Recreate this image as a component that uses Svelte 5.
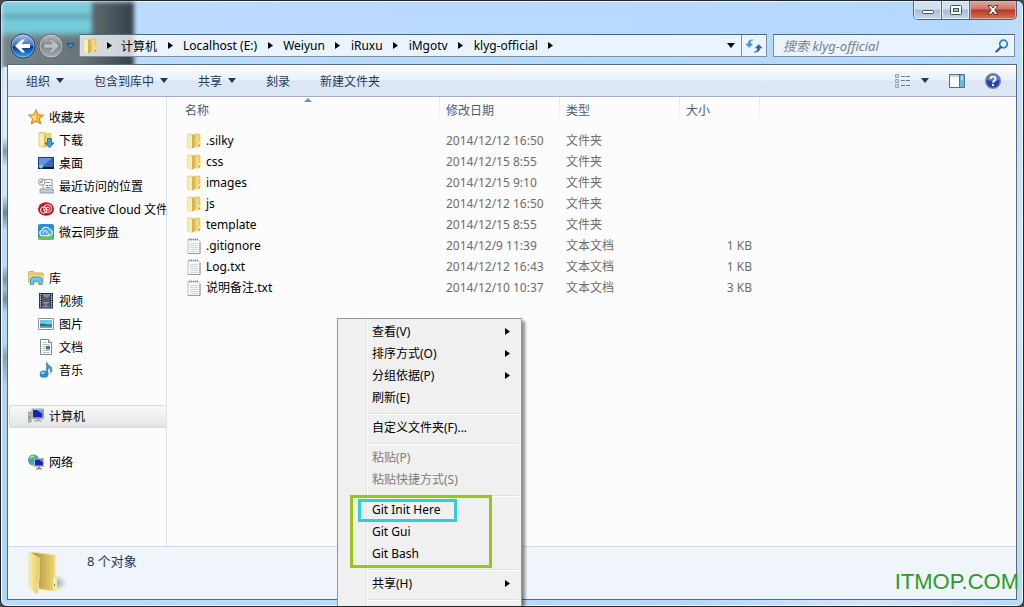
<script lang="ts">
  const crumbs = ['计算机', 'Localhost (E:)', 'Weiyun', 'iRuxu', 'iMgotv', 'klyg-official'];

  const commands = [
    { label: '组织', menu: true },
    { label: '包含到库中', menu: true },
    { label: '共享', menu: true },
    { label: '刻录', menu: false },
    { label: '新建文件夹', menu: false },
  ];

  const places = [
    {
      label: '收藏夹',
      icon: 'star',
      items: [
        { label: '下载', icon: 'download' },
        { label: '桌面', icon: 'desktop' },
        { label: '最近访问的位置', icon: 'recent' },
        { label: 'Creative Cloud 文件', icon: 'cc' },
        { label: '微云同步盘', icon: 'cloud' },
      ],
    },
    {
      label: '库',
      icon: 'library',
      items: [
        { label: '视频', icon: 'video' },
        { label: '图片', icon: 'picture' },
        { label: '文档', icon: 'doc' },
        { label: '音乐', icon: 'music' },
      ],
    },
    { label: '计算机', icon: 'computer', items: [] },
    { label: '网络', icon: 'network', items: [] },
  ];

  const files = [
    { name: '.silky', date: '2014/12/12 16:50', type: '文件夹', size: '' },
    { name: 'css', date: '2014/12/15 8:55', type: '文件夹', size: '' },
    { name: 'images', date: '2014/12/15 9:10', type: '文件夹', size: '' },
    { name: 'js', date: '2014/12/12 16:50', type: '文件夹', size: '' },
    { name: 'template', date: '2014/12/15 8:55', type: '文件夹', size: '' },
    { name: '.gitignore', date: '2014/12/9 11:39', type: '文本文档', size: '1 KB' },
    { name: 'Log.txt', date: '2014/12/12 16:43', type: '文本文档', size: '1 KB' },
    { name: '说明备注.txt', date: '2014/12/10 10:37', type: '文本文档', size: '3 KB' },
  ];

  const menu = [
    [
      { label: '查看(V)', sub: true },
      { label: '排序方式(O)', sub: true },
      { label: '分组依据(P)', sub: true },
      { label: '刷新(E)' },
    ],
    [{ label: '自定义文件夹(F)...' }],
    [
      { label: '粘贴(P)', disabled: true },
      { label: '粘贴快捷方式(S)', disabled: true },
    ],
    [{ label: 'Git Init Here' }, { label: 'Git Gui' }, { label: 'Git Bash' }],
    [{ label: '共享(H)', sub: true }],
    [],
  ];

  let current = $state('计算机');
  let query = $state('');
</script>

{#snippet icon(name)}
  <svg class="icon" viewBox="0 0 16 16" width="16" height="16" aria-hidden="true">
    {#if name === 'folder'}
      <path d="M1.500 1h5v14H3l-1.500-1z" fill="#f5e596" stroke="#e3cd7b" stroke-width=".6" />
      <path d="M8 1h6v12.500l-1 .5H8z" fill="#ecd173" stroke="#dfc263" stroke-width=".6" />
      <path d="M2 2l4 1v12.500L2 14z" fill="#f9efae" />
      <path d="M6 1.500l2 .5v13l-2 .5z" fill="#d3b452" />
      <path d="M8 2h2v12H8z" fill="#dfc264" />
      <path d="M10 2h2v12h-2z" fill="#f3dc83" />
      <path d="M13 9h1v4h-1z" fill="#fdf8d8" />
      <path d="M13 11.500h1v1.500h-1z" fill="#4fa8a8" />
    {:else if name === 'file'}
      <path d="M2 1.500h10l2 2v12H2z" fill="#f8fafb" stroke="#bcc1c5" />
      <path d="M14 4v11.500H2" fill="none" stroke="#989da1" />
      <path d="M3 1.500h9" stroke="#878c90" stroke-width="2" stroke-dasharray="1 1" />
      <path d="M4 5.500h8M4 7.500h8M4 9.500h8M4 11.500h8M4 13.500h8" stroke="#c9dae5" />
    {:else if name === 'star'}
      <path d="M8 .7l2.200 5 5.300.5-4 3.500 1.200 5.300L8 12.200 3.300 15l1.200-5.300-4-3.500 5.300-.5z" fill="#f9b233" stroke="#d9762b" stroke-width=".9" />
      <path d="M8 2.500L6.500 6.500l-4 .5 3.200 2.500L5 12.500l3-1.700z" fill="#fde58a" />
    {:else if name === 'download'}
      <path d="M1 .5h6l1 1h5v12.500H8L7 15.500 1 14z" fill="#eed67c" stroke="#dcc26c" stroke-width=".8" />
      <path d="M1.500 1.500L6 3v12l-4.500-1.500z" fill="#faefb0" />
      <path d="M6 3l2-1v12l-2 1z" fill="#d9bd5c" />
      <path d="M9.500 6.500h4V11H16l-4.500 4.800L7 11h2.500z" fill="#3aa0e0" stroke="#19659e" stroke-width=".8" />
    {:else if name === 'desktop'}
      <path d="M0 2h16v12H0z" fill="#16418c" />
      <path d="M1 3h14v9H1z" fill="#3566b8" />
      <path d="M1 3h13L5 11H1z" fill="#6794d8" />
      <path d="M0 12h16v2H0z" fill="#101e38" />
      <circle cx="3" cy="11.500" r="2" fill="#84cfe8" />
    {:else if name === 'recent'}
      <path d="M5 1.500h9V12H5z" fill="#fafafa" stroke="#9ba2a8" />
      <path d="M2 11h13l1 4H2z" fill="#c5cbd1" stroke="#8c9299" stroke-width=".8" />
      <path d="M8 4.500h4M8 9.500h4" stroke="#8d959c" />
      <path d="M8 7h2v1H8zM11 7h2v1h-2z" fill="#2f8fd6" />
      <circle cx="3.800" cy="4" r="3.300" fill="#eff2f4" stroke="#9299a0" />
      <path d="M4 2v2.200H2" fill="none" stroke="#667078" />
    {:else if name === 'cc'}
      <ellipse cx="8" cy="8" rx="8" ry="6.700" fill="#c2151f" />
      <circle cx="5.700" cy="9" r="3.200" fill="none" stroke="#fff" />
      <circle cx="9.700" cy="7.500" r="4" fill="none" stroke="#fff" />
      <path d="M5.500 9.500c1.500.5 2.500-3.500 4.500-3.500 2.200 0 2.200 3 0 3-1 0-1.500-.7-2-1.200" fill="none" stroke="#fff" />
    {:else if name === 'cloud'}
      <rect width="16" height="16" rx="2" fill="#2d8fd9" />
      <path d="M0 12.500h16V14a2 2 0 0 1-2 2H2a2 2 0 0 1-2-2z" fill="#62c94d" />
      <path d="M4.300 11.800a2.800 2.800 0 0 1-.3-5.500 4.200 4.200 0 0 1 7.900-.6 3.100 3.100 0 0 1-.2 6.100z" fill="#4ba6e5" stroke="#fff" stroke-width="1.100" />
      <path d="M5.500 9.500a2 2 0 0 1 3-2.500c1 .8.500 2.500-.7 2.500M8 11.800c2 0 3-1.200 3-2.800" fill="none" stroke="#fff" />
    {:else if name === 'library'}
      <path d="M0 3l1-1.500h5L7 3h8v9H0z" fill="#eecf6c" stroke="#c9a748" stroke-width=".8" />
      <path d="M1 5h14v8H1z" fill="#f9e99e" stroke="#d4b65c" stroke-width=".7" />
      <path d="M2.500 14.500V9l1.500-2h8.500L14 9v5.500h-3v-3.300H5.500v3.300z" fill="#6ecbed" stroke="#2d87b5" stroke-width=".8" />
    {:else if name === 'video'}
      <path d="M1 0h14v15.500H1z" fill="#262d36" />
      <path d="M2.500 1v14M13.500 1v14" stroke="#e2e6ea" stroke-width="1.300" stroke-dasharray="1.300 1" />
      <path d="M4 1h8v6.500H4zM4 8.500h8v6H4z" fill="#4aa0dc" />
      <path d="M4 1l4 4 4-2v4.500H4zM4 9l4 3 4-3v5l-4-2-4 2z" fill="#7a4b40" />
    {:else if name === 'picture'}
      <path d="M.5 2.500h15v11H.5z" fill="#fff" stroke="#8b9299" />
      <path d="M2 4h12v8H2z" fill="#74c5ed" />
      <path d="M2 8c4-2 7 2 12 0v4H2z" fill="#24776e" />
      <path d="M2 10.500c5-1.500 8 .5 12-.5v2H2z" fill="#4daed0" />
    {:else if name === 'doc'}
      <path d="M2.500.5h8l3 3v12h-11z" fill="#fff" stroke="#7f868c" />
      <path d="M10.500.5v3h3" fill="#dce2e6" stroke="#7f868c" />
      <path d="M4.500 3.500h4M4.500 5.500h7M4.500 7.500h3M4.500 9.500h3M4.500 11.500h7M4.500 13.500h7" stroke="#b5bdc4" />
      <path d="M8 7h4v3.500H8z" fill="#2878b4" />
    {:else if name === 'music'}
      <path d="M8.500 13V0c1 3.500 5.500 3.700 5.500 7.700 0 1.500-.6 2.500-1.500 3.500.7-3-.5-4.700-2.500-5.200V13z" fill="#3e9cdb" stroke="#1c669f" stroke-width=".5" />
      <ellipse cx="6" cy="12.200" rx="4.300" ry="3.600" fill="#2c8bd0" />
      <ellipse cx="5" cy="11" rx="2.200" ry="1.300" fill="#86c7ef" />
    {:else if name === 'computer'}
      <path d="M0 4h3v10H0z" fill="#b9bfc2" stroke="#81888c" stroke-width=".7" />
      <path d="M1 8h1v3H1z" fill="#50b64a" />
      <path d="M4 1h11.500v9.500H4z" fill="#d8dce2" stroke="#8b93a0" stroke-width=".8" />
      <path d="M5 2h9.500v7.500H5z" fill="#1523b4" />
      <path d="M9 2h5.500v4z" fill="#7f93f0" />
      <path d="M8.500 10.500h3V12H14v1.500H6V12h2.500z" fill="#a5acb5" />
    {:else if name === 'network'}
      <circle cx="5.500" cy="6" r="5.500" fill="#3c9dd6" />
      <path d="M2 2c3-2 5-1 6 0L6 4 3 6 1 5zM2 8l4 1-1 2.500z" fill="#5fc25b" />
      <path d="M2 4c2-2 3-2 4-1" fill="none" stroke="#d8f2ff" />
      <path d="M6 4.500h10v8H6z" fill="#cdd5de" stroke="#8a93a1" stroke-width=".6" />
      <path d="M7 5.500h8v6H7z" fill="#1425b5" />
      <path d="M11 5.500h4v3z" fill="#7c92ef" />
      <path d="M10 12.500h2V14h2v1.500H8V14h2z" fill="#838c99" />
    {/if}
  </svg>
{/snippet}

{#snippet chevron()}
  <svg class="chevron" width="5" height="7" viewBox="0 0 5 7" aria-hidden="true"><path d="M0 0l5 3.500L0 7z" fill="currentColor" /></svg>
{/snippet}

{#snippet caret()}
  <svg class="caret" width="8" height="5" viewBox="0 0 8 5" aria-hidden="true"><path d="M0 0h8L4 5z" fill="currentColor" /></svg>
{/snippet}

<div class="window">
  <div class="backdrop"></div>
  <div class="streaks"></div>

  <header class="frame">
    <div class="controls">
      <button aria-label="最小化">
        <svg width="14" height="10" viewBox="0 0 14 10"><rect x="1.500" y="5.500" width="11" height="3" rx="1" fill="#fff" stroke="#4a5563" /></svg>
      </button>
      <button aria-label="最大化">
        <svg width="12" height="10" viewBox="0 0 12 10"><rect x=".5" y=".5" width="11" height="9" rx="1" fill="#fff" stroke="#4a5563" /><rect x="3.500" y="3.500" width="5" height="3" fill="#a9bdd2" stroke="#4a5563" /></svg>
      </button>
      <button class="close" aria-label="关闭">
        <svg width="12" height="10" viewBox="0 0 12 10"><path d="M1 .5h3l2 2.500 2-2.500h3L7.800 5 11 9.500H8L6 7 4 9.500H1L4.200 5z" fill="#fff" stroke="#5b3a3c" /></svg>
      </button>
    </div>

    <nav class="navbar">
      <div class="history">
        <button aria-label="后退">
          <svg width="26" height="26" viewBox="0 0 26 26">
            <defs>
              <linearGradient id="back" x2="0" y2="1">
                <stop offset="0" stop-color="#a9c4ea" />
                <stop offset=".48" stop-color="#3f6fc0" />
                <stop offset=".52" stop-color="#0b348c" />
                <stop offset="1" stop-color="#29b1f0" />
              </linearGradient>
            </defs>
            <circle cx="13" cy="13" r="12" fill="url(#back)" stroke="#2a3c60" />
            <circle cx="13" cy="13" r="11" fill="none" stroke="#c3d8f2" stroke-opacity=".6" />
            <path d="M5 13l7-6.500h3L11.500 11H20v4h-8.500l3.500 4.500h-3z" fill="#fff" />
          </svg>
        </button>
        <button aria-label="前进">
          <svg width="26" height="26" viewBox="0 0 26 26">
            <defs>
              <linearGradient id="forward" x2="0" y2="1">
                <stop offset="0" stop-color="#b6b9bb" />
                <stop offset=".5" stop-color="#85898c" />
                <stop offset="1" stop-color="#a9adb0" />
              </linearGradient>
            </defs>
            <circle cx="13" cy="13" r="12" fill="url(#forward)" stroke="#5f6569" />
            <circle cx="13" cy="13" r="11" fill="none" stroke="#d2d6d8" stroke-opacity=".6" />
            <path d="M21 13l-7-6.500h-3l3.500 4.500H6v4h8.500L11 19.500h3z" fill="#bfc2c4" stroke="#7c8184" stroke-width=".6" />
          </svg>
        </button>
        <button class="recent" aria-label="最近浏览">
          <svg width="9" height="6" viewBox="0 0 9 6"><path d="M.7.7h7.600L4.500 5.300z" fill="#3e9bdc" stroke="#16477e" /></svg>
        </button>
      </div>

      <div class="address">
        {@render icon('folder')}
        <span class="sep root">{@render chevron()}</span>
        {#each crumbs as crumb}
          <button class="crumb">{crumb}</button>
          <span class="sep">{@render chevron()}</span>
        {/each}
        <button class="drop" aria-label="以前的位置">{@render caret()}</button>
        <button class="refresh" aria-label="刷新">
          <svg width="16" height="14" viewBox="0 0 16 14">
            <path d="M7 1C4.500 1 4.500 2.500 4.500 5h2L3.300 8.500 0 5h2.200c0-3 1.300-4.500 4.800-4z" fill="#4a9edb" stroke="#2f77b4" stroke-width=".5" />
            <path d="M8 13c2.700 0 3.500-1.500 3.500-4h-2l3.200-3.500L16 9h-2.200c0 3-1.800 4.500-5.800 4z" fill="#2f68b0" stroke="#1f4e8f" stroke-width=".5" />
          </svg>
        </button>
      </div>

      <label class="search">
        <input type="text" placeholder="搜索 klyg-official" aria-label="搜索" bind:value={query} />
        <svg width="14" height="14" viewBox="0 0 14 14">
          <circle cx="8.500" cy="5" r="3.800" fill="#e4f3fd" stroke="#3181cc" stroke-width="1.800" />
          <path d="M6 8L1.500 12.500" stroke="#3b5b93" stroke-width="2.400" stroke-linecap="round" />
        </svg>
      </label>
    </nav>
  </header>

  <div class="client">
    <div class="toolbar">
      {#each commands as command}
        <button>
          {command.label}
          {#if command.menu}{@render caret()}{/if}
        </button>
      {/each}
      <div class="tools">
        <button aria-label="更改您的视图">
          <svg width="16" height="14" viewBox="0 0 16 14">
            <path d="M.5.500h3v3h-3zM.5 5.500h3v3h-3zM.5 10.500h3v3h-3z" fill="#fff" stroke="#97a1ac" />
            <path d="M1.500 1.500h1v1h-1z" fill="#3e8a56" /><path d="M1.500 6.500h1v1h-1z" fill="#b23e38" /><path d="M1.500 11.500h1v1h-1z" fill="#356fb4" />
            <path d="M6 2.500h4M11 2.500h4M6 6.500h4M11 6.500h4M6 11.500h4M11 11.500h4" stroke="#6c7885" />
          </svg>
          {@render caret()}
        </button>
        <button aria-label="预览窗格">
          <svg width="16" height="14" viewBox="0 0 16 14">
            <path d="M.5.500h15v13H.5z" fill="#fff" stroke="#587080" />
            <path d="M1 1h9v2H1z" fill="#cbdad6" />
            <path d="M10.500 1H15v12h-4.500z" fill="#67b9d8" />
            <path d="M10.500 1v12" stroke="#587080" />
            <path d="M12 2h2v4h-2z" fill="#a4e2f1" />
          </svg>
        </button>
        <button aria-label="帮助">
          <svg width="16" height="16" viewBox="0 0 16 16">
            <circle cx="8" cy="8" r="7.300" fill="#2146ab" stroke="#7c889a" stroke-width="1.400" />
            <path d="M2 7a6 6 0 0 1 12 0c-4 2-8 1-12 0z" fill="#5a7fd2" />
            <path d="M5.500 6c0-3.200 5-3.200 5 0 0 1.700-2.400 1.900-2.400 3.700M8 11v1.900" fill="none" stroke="#fff" stroke-width="1.900" />
          </svg>
        </button>
      </div>
    </div>

    <div class="body">
      <aside>
        {#each places as place}
          <ul>
            <li>
              <a href="#top" class:active={place.label === current} onclick={() => (current = place.label)}>
                {@render icon(place.icon)}<span>{place.label}</span>
              </a>
            </li>
            {#each place.items as item}
              <li class="child">
                <a href="#top">{@render icon(item.icon)}<span>{item.label}</span></a>
              </li>
            {/each}
          </ul>
        {/each}
      </aside>

      <main>
        <table>
          <thead>
            <tr>
              <th class="name">
                名称
                <svg class="sorted" width="8" height="4" viewBox="0 0 8 4"><path d="M0 4l4-4 4 4z" fill="#6898b5" /></svg>
              </th>
              <th class="date">修改日期</th>
              <th class="type">类型</th>
              <th class="size">大小</th>
              <th class="rest"></th>
            </tr>
          </thead>
          <tbody>
            {#each files as file}
              <tr>
                <td><div class="file">{@render icon(file.size ? 'file' : 'folder')}{file.name}</div></td>
                <td>{file.date}</td>
                <td>{file.type}</td>
                <td class="number">{file.size}</td>
                <td></td>
              </tr>
            {/each}
          </tbody>
        </table>
      </main>
    </div>

    <footer>
      <svg width="40" height="44" viewBox="0 0 40 44" aria-hidden="true">
        <defs>
          <linearGradient id="flap"><stop offset="0" stop-color="#fbf0ac" /><stop offset="1" stop-color="#e6c95c" /></linearGradient>
          <linearGradient id="inner"><stop offset=".2" stop-color="#b89a43" /><stop offset="1" stop-color="#f2d976" /></linearGradient>
          <radialGradient id="shade"><stop offset="0" stop-color="#8d939a" stop-opacity=".8" /><stop offset="1" stop-color="#8d939a" stop-opacity="0" /></radialGradient>
        </defs>
        <ellipse cx="28" cy="32" rx="11" ry="8" fill="url(#shade)" />
        <path d="M3 1l24 3v21l1 14-2 1-15-2z" fill="url(#inner)" stroke="#f0df9a" />
        <path d="M1 1l10 6v22l-1 1v12l-2 1-7-7z" fill="url(#flap)" stroke="#f3e6a8" />
        <path d="M25 27l2-2 2 1v13l-4 1z" fill="#f7e896" />
        <path d="M26 28h1v5h-1z" fill="#fff" /><path d="M26 33h1v2h-1z" fill="#2a9a9c" />
      </svg>
      <p>8 个对象</p>
    </footer>
  </div>

  <div class="menu" role="menu">
    {#each menu as group}
      <div class="group" class:marked={group[0]?.label.startsWith('Git')}>
        {#each group as item}
          <button role="menuitem" disabled={item.disabled}>
            <span>{item.label}</span>
            {#if item.sub}{@render chevron()}{/if}
          </button>
        {/each}
      </div>
    {/each}
  </div>

  <div class="watermark">ITMOP.COM</div>
</div>

<style>
  :global(body) {
    margin: 0;
    background: #434e52;
  }

  .window {
    position: relative;
    box-sizing: border-box;
    display: flex;
    flex-direction: column;
    height: 100vh;
    overflow: hidden;
    border: 1px solid #20262e;
    border-radius: 7px;
    background: linear-gradient(115deg, #bcdcff 0%, #b5d8fe 75%, #d2e8fe 88%, #b8d9fb 100%);
    box-shadow: inset 0 0 0 1px #eef7ff;
    font-family: "Noto Sans", "Noto Sans CJK SC", sans-serif;
    font-size: 12px;
    color: #000;
  }

  button {
    display: flex;
    align-items: center;
    margin: 0;
    padding: 0;
    border: none;
    background: none;
    font: inherit;
    color: inherit;
    white-space: nowrap;
  }

  svg {
    display: block;
    flex: none;
  }

  /* blurred desktop showing through the glass */
  .backdrop {
    position: absolute;
    top: 1px;
    left: 1px;
    width: 132px;
    height: 66px;
    background:
      linear-gradient(#7ccbd9 0 11px, #5e9eaa 14px, #74cbd9 18px 29px, transparent 36px) 0 0 / 90px 40px no-repeat,
      linear-gradient(90deg, #77838a, #69737a 60%, #354149);
    filter: blur(2px);
  }

  .streaks {
    position: absolute;
    top: 66px;
    bottom: 6px;
    left: 2px;
    width: 4px;
    background: linear-gradient(#dfe9f2, #e4edf6 70px, #8795a4 84px, #d9e6f3 100px 128px, #b5d2f0 132px, #6f8194 146px, #c3dcf5 164px 198px, #7f90a2 212px, #a5bcd3 222px, #7b8c9e 232px, #b7d6f5 246px 276px, #8c9eb0 290px, #9fb5cb 304px, #b2d2f2 320px);
  }

  .frame {
    position: relative;
    display: flex;
    flex-direction: column;
    justify-content: space-between;
    height: 56px;
    padding: 0 6px 7px;
  }

  .controls {
    display: flex;
    align-self: flex-end;
    height: 18px;
    border: 1px solid #53647a;
    border-top: none;
    border-radius: 0 0 5px 5px;
    overflow: hidden;
  }

  .controls button {
    justify-content: center;
    box-sizing: border-box;
    width: 28px;
    border-right: 1px solid #53647a;
    background: linear-gradient(#d3e0ef 45%, #a7bdd5 50%, #c4d8ed);
    box-shadow: inset 0 0 0 1px #e4eefa;
  }

  .controls .close {
    width: 46px;
    border-right: none;
    background: linear-gradient(#dfa497 5%, #cc7466 45%, #b63524 50%, #d87657);
    box-shadow: inset 0 0 0 1px #e3aba0;
  }

  .navbar {
    display: flex;
    align-items: center;
    height: 23px;
  }

  .history {
    display: flex;
    align-items: center;
    gap: 2px;
    width: 69px;
    margin-left: 3px;
    flex: none;
  }

  .address,
  .search {
    display: flex;
    align-items: center;
    box-sizing: border-box;
    height: 23px;
    border: 1px solid #7b8fa3;
    border-top-color: #53677b;
    background: rgba(247, 251, 255, .78);
  }

  .address {
    flex: 1;
    min-width: 0;
    padding-left: 2px;
  }

  .address .sep {
    display: flex;
    justify-content: center;
    width: 26px;
  }

  .address .root {
    width: 23px;
  }

  .address .drop {
    margin-left: auto;
    margin-right: 6px;
  }

  .address .refresh {
    justify-content: center;
    width: 25px;
    height: 21px;
    border-left: 1px solid #7b8fa3;
  }

  .search {
    width: 242px;
    margin-left: 6px;
    margin-right: 2px;
    padding: 0 5px 0 9px;
  }

  .search input {
    flex: 1;
    min-width: 0;
    padding: 0;
    border: none;
    outline: none;
    background: none;
    font: inherit;
    font-size: 13px;
  }

  .search input::placeholder {
    font-style: italic;
    color: #7a8087;
  }

  .client {
    position: relative;
    display: flex;
    flex-direction: column;
    flex: 1;
    min-height: 0;
    margin: 0 6px 6px;
    border: 1px solid #59697c;
    background: #fcfcfc;
  }

  .toolbar {
    display: flex;
    align-items: center;
    gap: 30px;
    height: 31px;
    padding: 0 15px 0 18px;
    border-bottom: 1px solid #a0afc3;
    background: linear-gradient(#fbfdff, #e8f1fb 48%, #dce6f4 52%, #dde8f6);
    color: #1e395b;
  }

  .toolbar button {
    gap: 6px;
  }

  .tools {
    display: flex;
    align-items: center;
    gap: 20px;
    margin-left: auto;
  }

  .tools button:first-child {
    gap: 10px;
  }

  .body {
    display: flex;
    flex: 1;
    min-height: 0;
  }

  aside {
    box-sizing: border-box;
    width: 159px;
    flex: none;
    padding-top: 9px;
    border-right: 1px solid #d6e5f5;
  }

  aside ul {
    margin: 0 0 23px;
    padding: 0 0 0 1px;
    list-style: none;
  }

  aside a {
    display: flex;
    align-items: center;
    gap: 5px;
    box-sizing: border-box;
    height: 23px;
    padding: 0 0 2px 18px;
    border: 1px solid transparent;
    border-right: none;
    overflow: hidden;
    color: #000;
    text-decoration: none;
    white-space: nowrap;
  }

  aside .child a {
    padding-left: 28px;
  }

  aside a.active {
    border-color: #d9d9d9;
    border-radius: 3px 0 0 3px;
    background: linear-gradient(#f8f8f8, #e5e5e5);
  }

  main {
    flex: 1;
    min-width: 0;
  }

  table {
    width: 100%;
    table-layout: fixed;
    border-collapse: collapse;
  }

  th {
    position: relative;
    height: 33px;
    padding: 4px 0 0 6px;
    box-sizing: border-box;
    vertical-align: top;
    text-align: left;
    font-weight: normal;
    line-height: 20px;
    color: #4c607a;
    background: linear-gradient(#d6e5f5, #fcfcfc) right top / 1px 24px no-repeat;
  }

  th.name {
    width: 273px;
    padding-left: 18px;
  }

  th.date,
  th.type {
    width: 120px;
  }

  th.size {
    width: 80px;
  }

  th.rest {
    background: none;
  }

  .sorted {
    position: absolute;
    top: 1px;
    left: 50%;
  }

  td {
    height: 21px;
    padding: 0 0 0 6px;
    line-height: 21px;
    color: #6d6d6d;
    white-space: nowrap;
  }

  td:first-child {
    padding-left: 19px;
    color: #000;
  }

  td.number {
    padding-right: 8px;
    text-align: right;
  }

  .file {
    display: flex;
    align-items: center;
    gap: 4px;
    height: 21px;
  }

  footer {
    display: flex;
    height: 52px;
    padding-left: 20px;
    border-top: 1px solid #cddaea;
    background: #f0f4fb;
    color: #1e395b;
  }

  footer svg {
    margin-top: 4px;
  }

  footer p {
    margin: 4px 0 0 19px;
    font-size: 13px;
    line-height: 20px;
  }

  .menu {
    position: absolute;
    top: 317px;
    left: 336px;
    box-sizing: border-box;
    width: 185px;
    padding: 1px 2px 24px;
    border: 1px solid #979797;
    background: linear-gradient(90deg, #e2e3e3 1px, #fff 1px) 28px 0 / 2px 100% no-repeat, #f0f0f0;
    box-shadow: 3px 3px 3px rgba(0, 0, 0, .45);
  }

  .group {
    position: relative;
  }

  .group + .group {
    margin-top: 8px;
  }

  .group + .group::before {
    content: "";
    position: absolute;
    top: -3px;
    left: 28px;
    right: 0;
    height: 1px;
    border-bottom: 1px solid #fff;
    background: #e0e0e0;
  }

  .menu button {
    justify-content: space-between;
    width: 100%;
    height: 22px;
    padding: 0 9px 0 32px;
  }

  .menu button:disabled {
    color: #7d7d7d;
  }

  .marked::after {
    content: "";
    position: absolute;
    inset: -3px 27px -4px 10px;
    border: 3px solid #97c61a;
    pointer-events: none;
  }

  .marked button:first-child::before {
    content: "";
    position: absolute;
    top: 1px;
    left: 18px;
    width: 93px;
    height: 17px;
    border: 3px solid #2fd0d0;
  }

  .watermark {
    position: absolute;
    right: 4px;
    bottom: 11px;
    font-family: "Liberation Sans", Arial, sans-serif;
    font-size: 22px;
    line-height: 26px;
    color: #2f9a22;
  }
</style>
